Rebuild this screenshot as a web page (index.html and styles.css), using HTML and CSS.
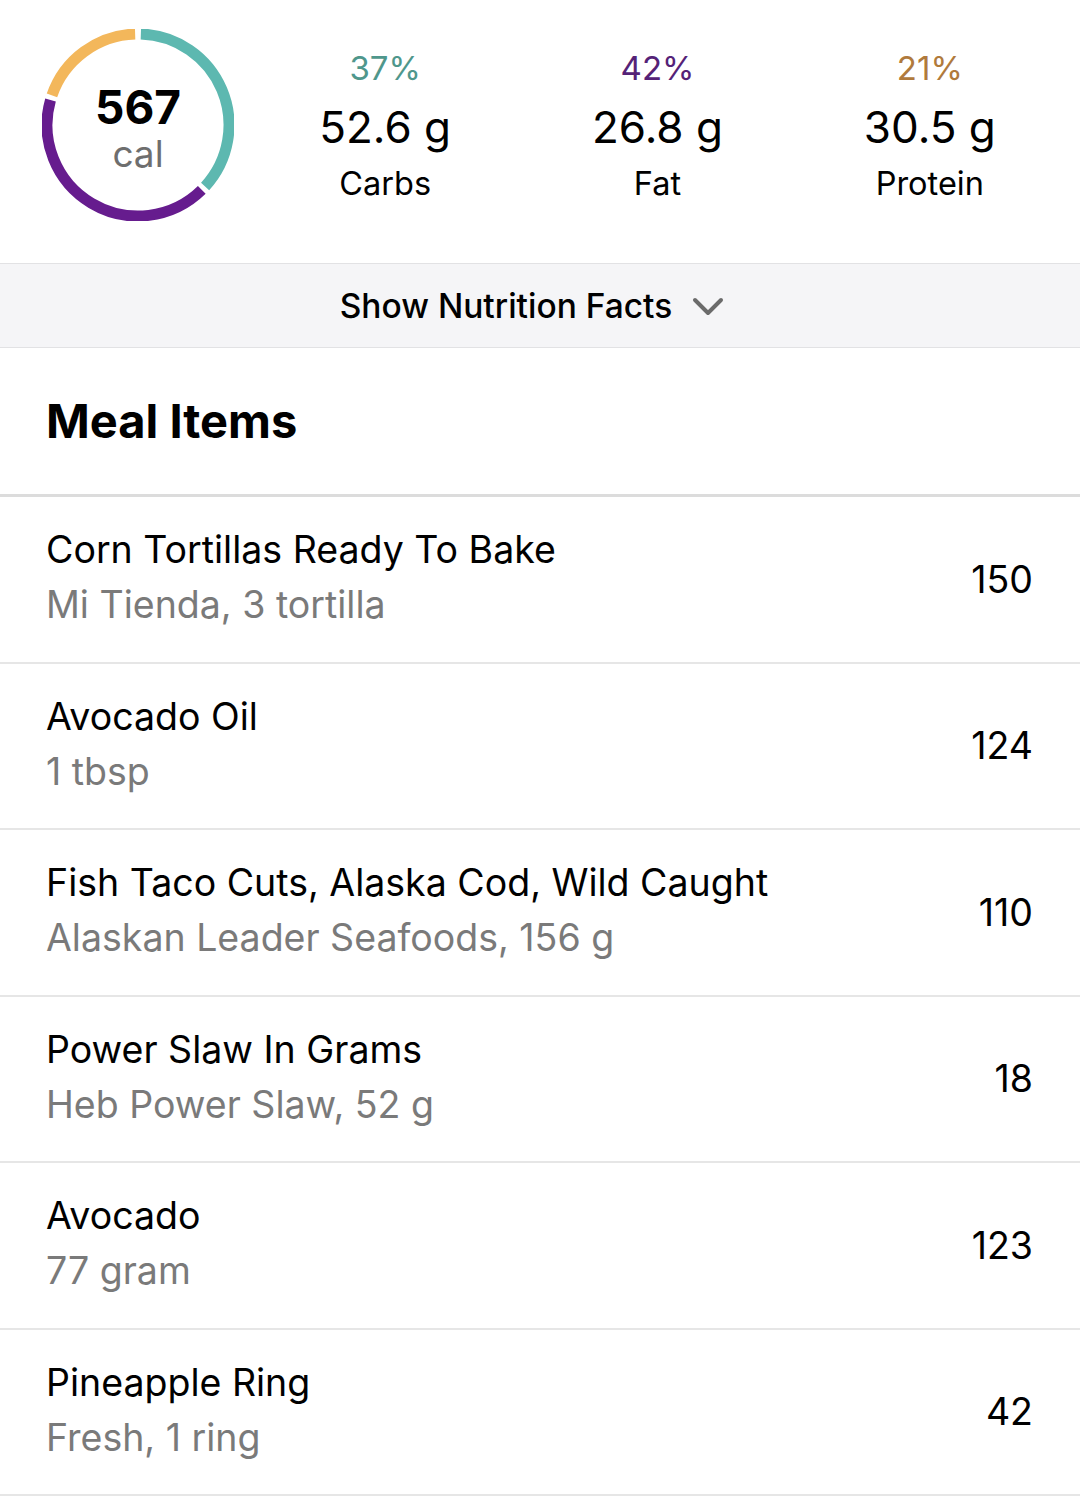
FILE: index.html
```html
<!DOCTYPE html>
<html>
<head>
<meta charset="utf-8">
<link rel="stylesheet" href="styles.css">
</head>
<body>
<div class="summary">
  <div class="ring">
    <svg width="192" height="192" viewBox="0 0 192 192">
      <path d="M98.86 5.04 A91 91 0 0 1 163.09 157.48" class="arc teal"/>
      <path d="M159.78 160.91 A91 91 0 0 1 8.52 70.92" class="arc purple"/>
      <path d="M9.96 66.37 A91 91 0 0 1 93.14 5.04" class="arc gold"/>
    </svg>
    <div class="ring-text">
      <div class="cal-num">567</div>
      <div class="cal-unit">cal</div>
    </div>
  </div>
  <div class="macros">
    <div class="macro">
      <div class="pct pct-carbs">37%</div>
      <div class="grams">52.6 g</div>
      <div class="label">Carbs</div>
    </div>
    <div class="macro">
      <div class="pct pct-fat">42%</div>
      <div class="grams">26.8 g</div>
      <div class="label">Fat</div>
    </div>
    <div class="macro">
      <div class="pct pct-protein">21%</div>
      <div class="grams">30.5 g</div>
      <div class="label">Protein</div>
    </div>
  </div>
</div>
<div class="facts-bar">
  <span class="facts-text">Show Nutrition Facts</span>
  <svg class="chevron" width="32" height="20" viewBox="0 0 32 20"><path d="M3 3 L16 16 L29 3" /></svg>
</div>
<div class="heading"><h2>Meal Items</h2></div>
<div class="items">
  <div class="item">
    <div class="item-text"><div class="item-name">Corn Tortillas Ready To Bake</div><div class="item-sub">Mi Tienda, 3 tortilla</div></div>
    <div class="item-cal">150</div>
  </div>
  <div class="item">
    <div class="item-text"><div class="item-name">Avocado Oil</div><div class="item-sub">1 tbsp</div></div>
    <div class="item-cal">124</div>
  </div>
  <div class="item">
    <div class="item-text"><div class="item-name">Fish Taco Cuts, Alaska Cod, Wild Caught</div><div class="item-sub">Alaskan Leader Seafoods, 156 g</div></div>
    <div class="item-cal">110</div>
  </div>
  <div class="item">
    <div class="item-text"><div class="item-name">Power Slaw In Grams</div><div class="item-sub">Heb Power Slaw, 52 g</div></div>
    <div class="item-cal">18</div>
  </div>
  <div class="item">
    <div class="item-text"><div class="item-name">Avocado</div><div class="item-sub">77 gram</div></div>
    <div class="item-cal">123</div>
  </div>
  <div class="item">
    <div class="item-text"><div class="item-name">Pineapple Ring</div><div class="item-sub">Fresh, 1 ring</div></div>
    <div class="item-cal">42</div>
  </div>
</div>
</body>
</html>
```
FILE: styles.css
```css
* { box-sizing: border-box; }
html, body { margin: 0; padding: 0; background: #fff; }
body {
  width: 1080px;
  font-family: Inter, "Liberation Sans", Arial, sans-serif;
  color: #000;
  overflow: hidden;
}
.summary {
  display: flex;
  align-items: flex-start;
  padding: 29px 14px 0 42px;
  border-bottom: 1px solid #e2e2e4;
  height: 264px;
}
.ring {
  position: relative;
  width: 192px;
  height: 192px;
  flex: none;
}
.ring svg { display: block; }
.arc { fill: none; stroke-width: 11; stroke-linecap: butt; }
.teal { stroke: #5db8b0; }
.purple { stroke: #661c8e; }
.gold { stroke: #f3b75b; }
.ring-text {
  position: absolute;
  inset: 0;
  display: flex;
  flex-direction: column;
  align-items: center;
  justify-content: center;
}
.cal-num { font-size: 46px; font-weight: 700; line-height: 50px; margin-top: 8px; }
.cal-unit { font-size: 37px; color: #6e6e6e; line-height: 44px; }
.macros {
  flex: 1;
  display: flex;
  margin-left: 15px;
}
.macro {
  flex: 1;
  display: flex;
  flex-direction: column;
  align-items: center;
}
.pct { font-size: 33px; line-height: 40px; margin-top: 19px; }
.pct-carbs { color: #4f978c; }
.pct-fat { color: #552277; }
.pct-protein { color: #b07a3c; }
.grams { font-size: 44px; line-height: 60px; margin-top: 9px; }
.label { font-size: 32.5px; line-height: 54px; }
.facts-bar {
  height: 84px;
  background: #f5f5f7;
  border-bottom: 1px solid #e2e2e4;
  display: flex;
  align-items: center;
  justify-content: center;
  padding-right: 16px;
}
.facts-text { font-size: 33.5px; font-weight: 500; }
.chevron { margin-left: 20px; margin-top: 2px; }
.chevron path { fill: none; stroke: #6b6b6b; stroke-width: 4; stroke-linecap: round; stroke-linejoin: round; }
.heading {
  height: 149px;
  border-bottom: 3px solid #dcdcdc;
  display: flex;
  align-items: center;
  padding-left: 46px;
}
.heading h2 { margin: 0; font-size: 47px; font-weight: 700; line-height: 60px; }
.item {
  height: 166.5px;
  border-bottom: 2px solid #e6e6e6;
  display: flex;
  align-items: center;
  padding: 0 47px 0 46px;
}
.item-text { flex: 1; }
.item-name { font-size: 37.5px; line-height: 55px; margin-top: -4px; }
.item-sub { font-size: 37.5px; line-height: 55px; color: #7a7a7a; }
.item-cal { font-size: 37.5px; }
```
